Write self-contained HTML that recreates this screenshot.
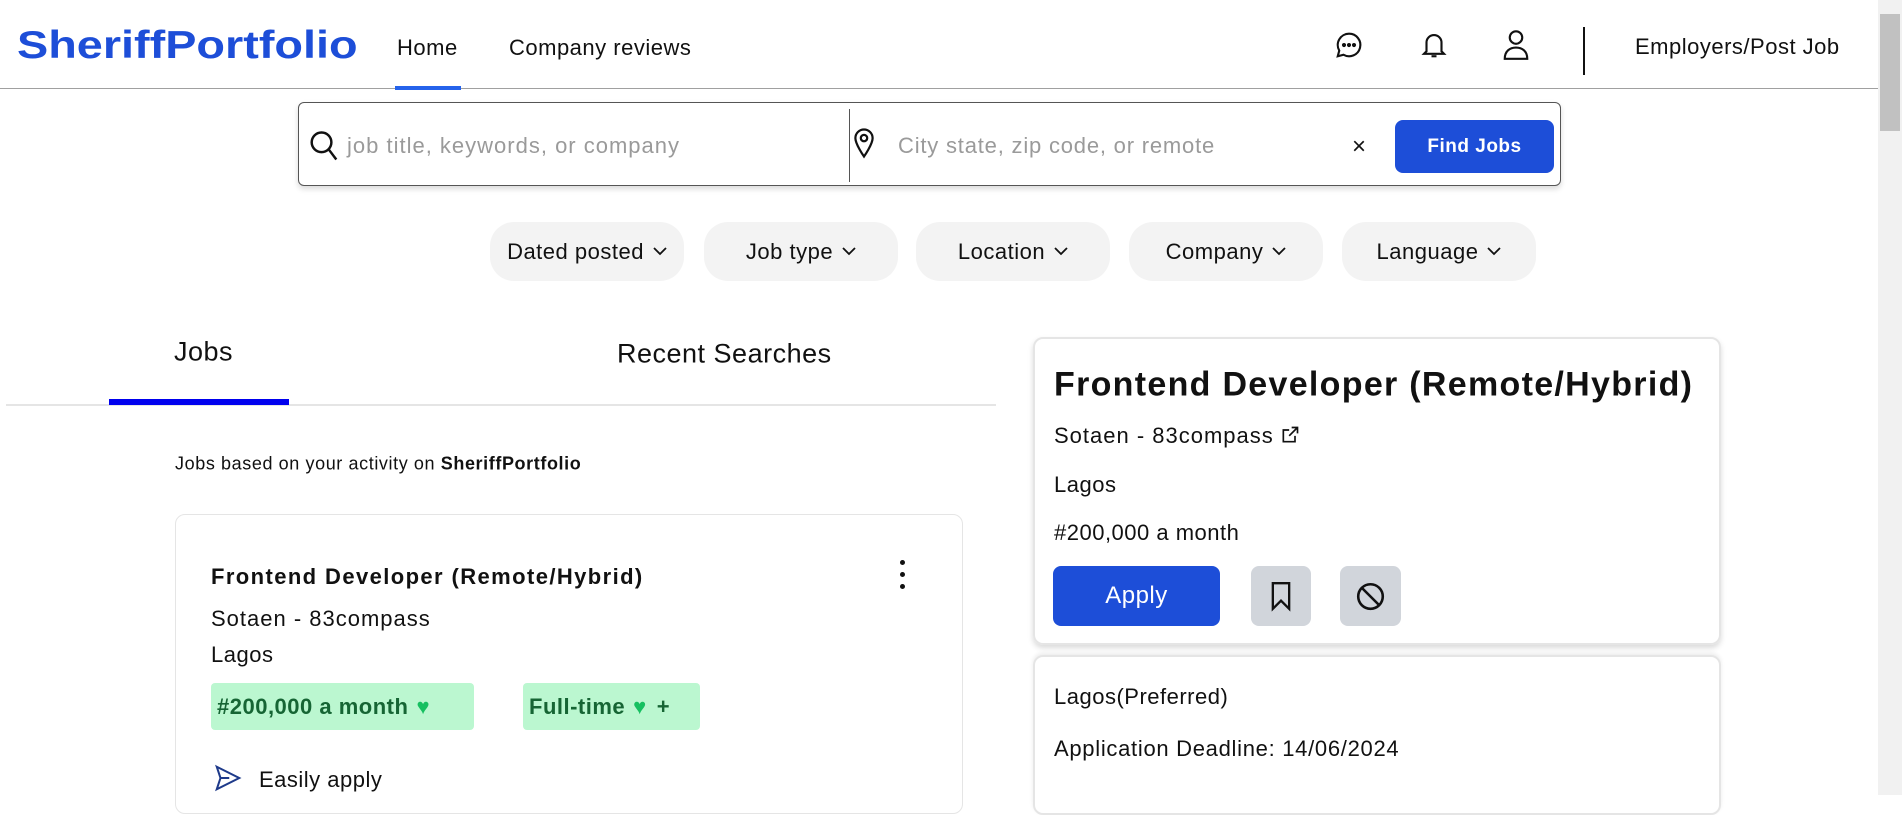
<!DOCTYPE html>
<html><head><meta charset="utf-8"><style>
*{box-sizing:border-box;margin:0;padding:0}
body{width:1902px;height:795px;overflow:hidden;background:#fff;font-family:"Liberation Sans",sans-serif;color:#111;position:relative;letter-spacing:0.5px}
.a{position:absolute;white-space:nowrap}
.c{transform:translateY(-50%)}
svg{display:block}
.pill{position:absolute;top:222px;height:59px;background:#f3f3f3;border-radius:24px;font-size:22px;display:flex;align-items:center;justify-content:center;gap:9px}
.btn{position:absolute;border-radius:8px}
.ch{width:14px;height:9px}
</style></head><body>
<div class="a c" style="left:17px;top:46px;font-size:39px;font-weight:bold;color:#1d4ed8;letter-spacing:0;transform:translateY(-50%) scaleX(1.2);transform-origin:left center">SheriffPortfolio</div>
<div class="a c" style="left:397px;top:48px;font-size:22px">Home</div>
<div class="a c" style="left:509px;top:48px;font-size:22px">Company reviews</div>
<div class="a" style="left:0;top:88px;width:1878px;height:1px;background:#a0a0a0"></div>
<div class="a" style="left:395px;top:86px;width:66px;height:4px;background:#2563eb"></div>
<svg class="a" style="left:1334px;top:30px" width="30" height="30" viewBox="0 0 24 24" fill="none" stroke="#111" stroke-width="1.7"><path d="M12 3a9 9 0 0 0-7.8 13.5L3 21l4.6-1.2A9 9 0 1 0 12 3z"/><circle cx="8" cy="12" r=".8" fill="#111"/><circle cx="12" cy="12" r=".8" fill="#111"/><circle cx="16" cy="12" r=".8" fill="#111"/></svg>
<svg class="a" style="left:1419px;top:29px" width="30" height="32" viewBox="0 0 24 24" fill="none" stroke="#111" stroke-width="1.7"><path d="M6 17V10a6 6 0 0 1 12 0v7l2 2H4z"/><path d="M10 21h4"/></svg>
<svg class="a" style="left:1501px;top:28px" width="30" height="34" viewBox="0 0 24 26" fill="none" stroke="#111" stroke-width="1.7"><circle cx="12" cy="7" r="5"/><path d="M3 24c0-6 4-9 9-9s9 3 9 9z"/></svg>
<div class="a" style="left:1583px;top:27px;width:2px;height:48px;background:#111"></div>
<div class="a c" style="left:1635px;top:47px;font-size:22px">Employers/Post Job</div>
<div class="a" style="left:1878px;top:0;width:24px;height:795px;background:#f1f1f1"></div>
<div class="a" style="left:1880px;top:14px;width:20px;height:117px;background:#c1c1c1"></div>

<div class="a" style="left:298px;top:102px;width:1263px;height:84px;border:1px solid #555;border-radius:6px;box-shadow:0 3px 6px rgba(0,0,0,.15)"></div>
<svg class="a" style="left:309px;top:130px" width="30" height="32" viewBox="0 0 24 26" fill="none" stroke="#111" stroke-width="2"><circle cx="10" cy="10" r="8"/><path d="M16 16l6 8"/></svg>
<div class="a c" style="left:347px;top:146px;font-size:22px;color:#9a9a9a;letter-spacing:1px">job title, keywords, or company</div>
<div class="a" style="left:849px;top:109px;width:1px;height:73px;background:#555"></div>
<svg class="a" style="left:852px;top:127px" width="24" height="32" viewBox="0 0 18 26" fill="none" stroke="#111" stroke-width="1.8"><path d="M9 24S2 14 2 9a7 7 0 0 1 14 0c0 5-7 15-7 15z"/><circle cx="9" cy="9" r="2.6"/></svg>
<div class="a c" style="left:898px;top:146px;font-size:22px;color:#9a9a9a;letter-spacing:0.8px">City state, zip code, or remote</div>
<div class="a c" style="left:1352px;top:147px;font-size:24px">×</div>
<div class="btn" style="left:1395px;top:120px;width:159px;height:53px;background:#1d4ed8;color:#fff;font-weight:bold;font-size:19px;display:flex;align-items:center;justify-content:center">Find Jobs</div>

<div class="pill" style="left:490px;width:194px">Dated posted <svg class="ch" viewBox="0 0 14 9"><path d="M1 1l6 6 6-6" fill="none" stroke="#111" stroke-width="1.8"/></svg></div>
<div class="pill" style="left:704px;width:194px">Job type <svg class="ch" viewBox="0 0 14 9"><path d="M1 1l6 6 6-6" fill="none" stroke="#111" stroke-width="1.8"/></svg></div>
<div class="pill" style="left:916px;width:194px">Location <svg class="ch" viewBox="0 0 14 9"><path d="M1 1l6 6 6-6" fill="none" stroke="#111" stroke-width="1.8"/></svg></div>
<div class="pill" style="left:1129px;width:194px">Company <svg class="ch" viewBox="0 0 14 9"><path d="M1 1l6 6 6-6" fill="none" stroke="#111" stroke-width="1.8"/></svg></div>
<div class="pill" style="left:1342px;width:194px">Language <svg class="ch" viewBox="0 0 14 9"><path d="M1 1l6 6 6-6" fill="none" stroke="#111" stroke-width="1.8"/></svg></div>

<div class="a c" style="left:174px;top:352px;font-size:27px">Jobs</div>
<div class="a c" style="left:617px;top:354px;font-size:27px">Recent Searches</div>
<div class="a" style="left:6px;top:404px;width:990px;height:2px;background:#e5e5e5"></div>
<div class="a" style="left:109px;top:399px;width:180px;height:6px;background:#0000ee"></div>
<div class="a c" style="left:175px;top:464px;font-size:18px;letter-spacing:0.6px">Jobs based on your activity on <b>SheriffPortfolio</b></div>

<div class="a" style="left:175px;top:514px;width:788px;height:300px;border:1px solid #e5e5e5;border-radius:10px"></div>
<div class="a c" style="left:211px;top:577px;font-size:22px;font-weight:bold;letter-spacing:1.4px">Frontend Developer (Remote/Hybrid)</div>
<div class="a" style="left:900px;top:560px;width:5px;height:5px;border-radius:50%;background:#111;box-shadow:0 12px 0 #111,0 24px 0 #111"></div>
<div class="a c" style="left:211px;top:619px;font-size:22px;letter-spacing:1px">Sotaen - 83compass</div>
<div class="a c" style="left:211px;top:655px;font-size:22px">Lagos</div>
<div class="a" style="left:211px;top:683px;width:263px;height:47px;background:#bbf7d0;border-radius:4px;color:#166534;font-weight:bold;font-size:22px;display:flex;align-items:center;padding-left:6px">#200,000 a month <span style="color:#16c060;margin-left:8px">&#9829;</span></div>
<div class="a" style="left:523px;top:683px;width:177px;height:47px;background:#bbf7d0;border-radius:4px;color:#166534;font-weight:bold;font-size:22px;display:flex;align-items:center;padding-left:6px">Full-time <span style="color:#16c060;margin:0 10px 0 8px">&#9829;</span>+</div>
<svg class="a" style="left:213px;top:763px" width="30" height="30" viewBox="0 0 24 24" fill="none" stroke="#1e3a8a" stroke-width="1.6"><path d="M3 3l18 9-18 9 3-9z"/><path d="M6 12h7"/></svg>
<div class="a c" style="left:259px;top:780px;font-size:22px">Easily apply</div>

<div class="a" style="left:1033px;top:337px;width:688px;height:308px;border:2px solid #e5e5e5;border-radius:10px;box-shadow:0 3px 6px rgba(0,0,0,.15)"></div>
<div class="a c" style="left:1054px;top:385px;font-size:34px;font-weight:bold;letter-spacing:1.3px">Frontend Developer (Remote/Hybrid)</div>
<div class="a c" style="left:1054px;top:436px;font-size:22px;letter-spacing:1px">Sotaen - 83compass</div>
<svg class="a" style="left:1280px;top:425px" width="20" height="20" viewBox="0 0 24 24" fill="none" stroke="#111" stroke-width="2"><path d="M18 13v7H4V6h7"/><path d="M14 3h7v7M21 3l-10 10"/></svg>
<div class="a c" style="left:1054px;top:485px;font-size:22px">Lagos</div>
<div class="a c" style="left:1054px;top:533px;font-size:22px">#200,000 a month</div>
<div class="btn" style="left:1053px;top:566px;width:167px;height:60px;background:#1d4ed8;color:#fff;font-size:24px;display:flex;align-items:center;justify-content:center">Apply</div>
<div class="btn" style="left:1251px;top:566px;width:60px;height:60px;background:#d1d5db"></div>
<svg class="a" style="left:1267px;top:580px" width="28" height="32" viewBox="0 0 24 26" fill="none" stroke="#111" stroke-width="2"><path d="M5 2h14v22l-7-7-7 7z"/></svg>
<div class="btn" style="left:1340px;top:566px;width:61px;height:60px;background:#d1d5db"></div>
<svg class="a" style="left:1355px;top:581px" width="31" height="31" viewBox="0 0 24 24" fill="none" stroke="#111" stroke-width="2"><circle cx="12" cy="12" r="9.5"/><path d="M5.5 5.5l13 13"/></svg>

<div class="a" style="left:1033px;top:655px;width:688px;height:160px;border:2px solid #e5e5e5;border-radius:10px;box-shadow:0 -2px 4px rgba(0,0,0,.08)"></div>
<div class="a c" style="left:1054px;top:697px;font-size:22px">Lagos(Preferred)</div>
<div class="a c" style="left:1054px;top:749px;font-size:22px;letter-spacing:0.7px">Application Deadline: 14/06/2024</div>
</body></html>
